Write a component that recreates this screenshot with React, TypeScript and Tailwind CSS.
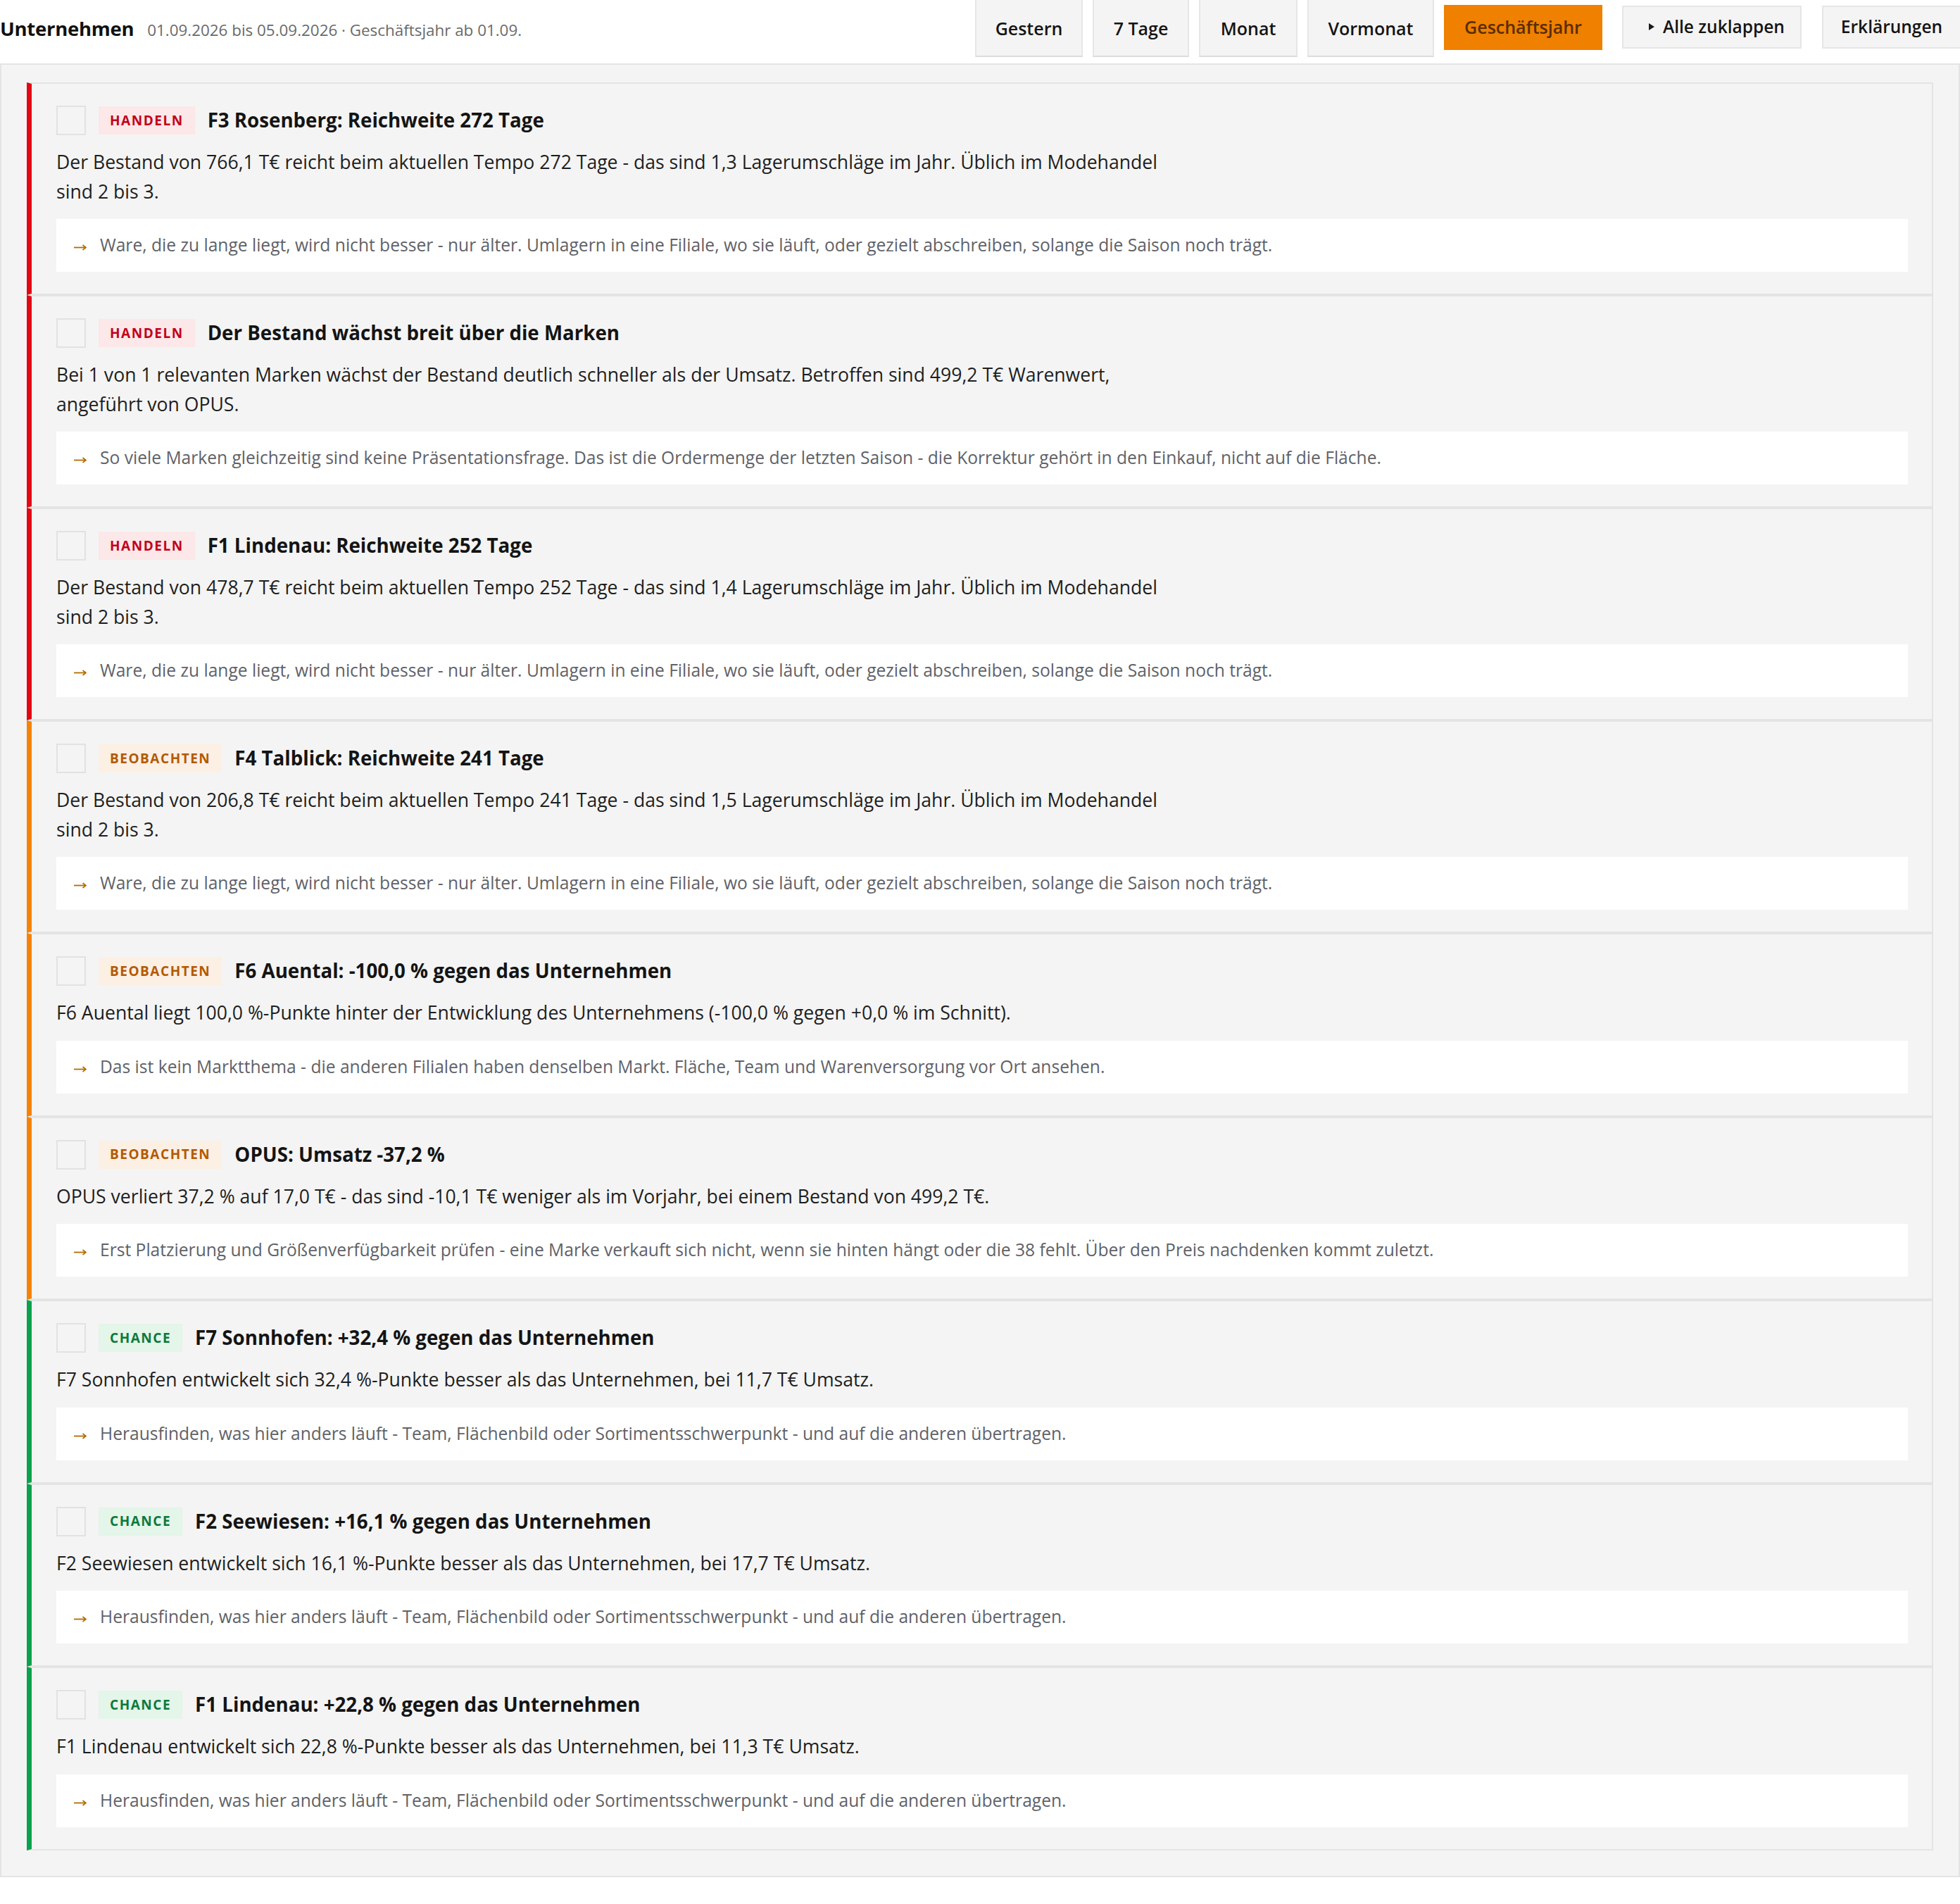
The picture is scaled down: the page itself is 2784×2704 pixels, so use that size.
type Level = 'handeln' | 'beobachten' | 'chance';

interface Hint {
  level: Level;
  title: string;
  body: string;
  note: string;
}

const NOTE_REICHWEITE =
  'Ware, die zu lange liegt, wird nicht besser - nur älter. Umlagern in eine Filiale, wo sie läuft, oder gezielt abschreiben, solange die Saison noch trägt.';
const NOTE_CHANCE =
  'Herausfinden, was hier anders läuft - Team, Flächenbild oder Sortimentsschwerpunkt - und auf die anderen übertragen.';

const hints: Hint[] = [
  {
    level: 'handeln',
    title: 'F3 Rosenberg: Reichweite 272 Tage',
    body: 'Der Bestand von 766,1 T€ reicht beim aktuellen Tempo 272 Tage - das sind 1,3 Lagerumschläge im Jahr. Üblich im Modehandel sind 2 bis 3.',
    note: NOTE_REICHWEITE,
  },
  {
    level: 'handeln',
    title: 'Der Bestand wächst breit über die Marken',
    body: 'Bei 1 von 1 relevanten Marken wächst der Bestand deutlich schneller als der Umsatz. Betroffen sind 499,2 T€ Warenwert, angeführt von OPUS.',
    note: 'So viele Marken gleichzeitig sind keine Präsentationsfrage. Das ist die Ordermenge der letzten Saison - die Korrektur gehört in den Einkauf, nicht auf die Fläche.',
  },
  {
    level: 'handeln',
    title: 'F1 Lindenau: Reichweite 252 Tage',
    body: 'Der Bestand von 478,7 T€ reicht beim aktuellen Tempo 252 Tage - das sind 1,4 Lagerumschläge im Jahr. Üblich im Modehandel sind 2 bis 3.',
    note: NOTE_REICHWEITE,
  },
  {
    level: 'beobachten',
    title: 'F4 Talblick: Reichweite 241 Tage',
    body: 'Der Bestand von 206,8 T€ reicht beim aktuellen Tempo 241 Tage - das sind 1,5 Lagerumschläge im Jahr. Üblich im Modehandel sind 2 bis 3.',
    note: NOTE_REICHWEITE,
  },
  {
    level: 'beobachten',
    title: 'F6 Auental: -100,0 % gegen das Unternehmen',
    body: 'F6 Auental liegt 100,0 %-Punkte hinter der Entwicklung des Unternehmens (-100,0 % gegen +0,0 % im Schnitt).',
    note: 'Das ist kein Marktthema - die anderen Filialen haben denselben Markt. Fläche, Team und Warenversorgung vor Ort ansehen.',
  },
  {
    level: 'beobachten',
    title: 'OPUS: Umsatz -37,2 %',
    body: 'OPUS verliert 37,2 % auf 17,0 T€ - das sind -10,1 T€ weniger als im Vorjahr, bei einem Bestand von 499,2 T€.',
    note: 'Erst Platzierung und Größenverfügbarkeit prüfen - eine Marke verkauft sich nicht, wenn sie hinten hängt oder die 38 fehlt. Über den Preis nachdenken kommt zuletzt.',
  },
  {
    level: 'chance',
    title: 'F7 Sonnhofen: +32,4 % gegen das Unternehmen',
    body: 'F7 Sonnhofen entwickelt sich 32,4 %-Punkte besser als das Unternehmen, bei 11,7 T€ Umsatz.',
    note: NOTE_CHANCE,
  },
  {
    level: 'chance',
    title: 'F2 Seewiesen: +16,1 % gegen das Unternehmen',
    body: 'F2 Seewiesen entwickelt sich 16,1 %-Punkte besser als das Unternehmen, bei 17,7 T€ Umsatz.',
    note: NOTE_CHANCE,
  },
  {
    level: 'chance',
    title: 'F1 Lindenau: +22,8 % gegen das Unternehmen',
    body: 'F1 Lindenau entwickelt sich 22,8 %-Punkte besser als das Unternehmen, bei 11,3 T€ Umsatz.',
    note: NOTE_CHANCE,
  },
];

const levelStyles: Record<Level, { bar: string; badge: string; label: string }> = {
  handeln: {
    bar: 'border-l-[#e30613]',
    badge: 'bg-[#fce8e9] text-[#c2001b]',
    label: 'Handeln',
  },
  beobachten: {
    bar: 'border-l-[#f5820a]',
    badge: 'bg-[#fcefe4] text-[#b35a00]',
    label: 'Beobachten',
  },
  chance: {
    bar: 'border-l-[#0ba24c]',
    badge: 'bg-[#e4f5e9] text-[#0b7a3b]',
    label: 'Chance',
  },
};

function HintCard({ hint }: { hint: Hint }) {
  const s = levelStyles[hint.level];
  return (
    <div className={`bg-[#f4f4f4] border-2 border-[#e4e4e4] border-l-[7px] ${s.bar} pl-[35px] pr-[34px] pt-[31px] pb-[31px]`}>
      {/* Kopfzeile */}
      <div className="flex items-center gap-[18px] h-[42px]">
        <div className="w-[42px] h-[42px] border-2 border-[#e2e2e2] flex-shrink-0" />
        <span className={`h-[40px] px-[16px] flex items-center uppercase font-bold text-[19px] tracking-[0.08em] ${s.badge}`}>
          {s.label}
        </span>
        <h3 className="text-[27.7px] font-bold text-[#141414]">{hint.title}</h3>
      </div>

      <p className="mt-[18px] max-w-[1590px] text-[26.6px] leading-[41.5px] text-[#1e1e1e]">{hint.body}</p>

      {/* Empfehlung */}
      <div className="mt-[18px] h-[75px] bg-white flex items-center pl-[25px] gap-[19px] text-[24.6px] text-[#606268]">
        <svg width="18" height="9" viewBox="0 0 18 9" className="flex-shrink-0 mt-[6px]">
          <path d="M0 4.5H16.5" stroke="#b36b00" strokeWidth="1.8" fill="none" />
          <path d="M12.5 1L17 4.5L12.5 8" stroke="#b36b00" strokeWidth="1.6" fill="none" />
        </svg>
        <span>{hint.note}</span>
      </div>
    </div>
  );
}

const periods = [
  { label: 'Gestern', w: 'w-[153px]' },
  { label: '7 Tage', w: 'w-[137px]' },
  { label: 'Monat', w: 'w-[140px]' },
  { label: 'Vormonat', w: 'w-[180px]' },
];

export default function App() {
  return (
    <div className="bg-white min-h-screen font-['Open_Sans',sans-serif] text-[#111]">
      {/* Header */}
      <div className="h-[81px] flex items-center justify-between">
        <div className="flex items-baseline gap-[19px]">
          <h1 className="text-[27.5px] font-bold text-[#111] tracking-[-0.01em]">Unternehmen</h1>
          <span className="text-[22.4px] text-[#6a6a6a]">01.09.2026 bis 05.09.2026 · Geschäftsjahr ab 01.09.</span>
        </div>

        <div className="flex items-center">
          <div className="flex items-center gap-[14px]">
            {periods.map((p) => (
              <button
                key={p.label}
                className={`${p.w} h-[81px] bg-[#f4f4f4] border-x-2 border-b-2 border-[#e6e6e6] border-b-[#dcdcdc] text-[25px] font-semibold text-[#141414] pt-[2px]`}
              >
                {p.label}
              </button>
            ))}
            <button className="w-[225px] h-[64px] bg-[#ef8000] text-[25px] font-semibold text-[#5a2c00] -mt-[4px]">
              Geschäftsjahr
            </button>
          </div>
          <button className="ml-[28px] w-[255px] h-[61px] -mt-[5px] bg-[#f4f4f4] border-2 border-[#e6e6e6] flex items-center pl-[36px] gap-[12px] text-[24.5px] font-semibold text-[#141414]">
            <svg width="8" height="10" viewBox="0 0 8 10" className="flex-shrink-0">
              <polygon points="0,0 8,5 0,10" fill="#1a1a1a" />
            </svg>
            Alle zuklappen
          </button>
          <button className="ml-[29px] w-[196px] h-[61px] -mt-[5px] bg-[#f4f4f4] border-2 border-r-0 border-[#e6e6e6] text-[24.5px] font-semibold text-[#141414]">
            Erklärungen
          </button>
        </div>
      </div>

      {/* Liste */}
      <div className="mt-[9px] bg-[#f4f4f4] border-2 border-[#e4e4e4] pt-[25px] px-[36px] pb-[36px]">
        <div className="flex flex-col">
          {hints.map((h, i) => (
            <HintCard key={i} hint={h} />
          ))}
        </div>
      </div>
    </div>
  );
}
